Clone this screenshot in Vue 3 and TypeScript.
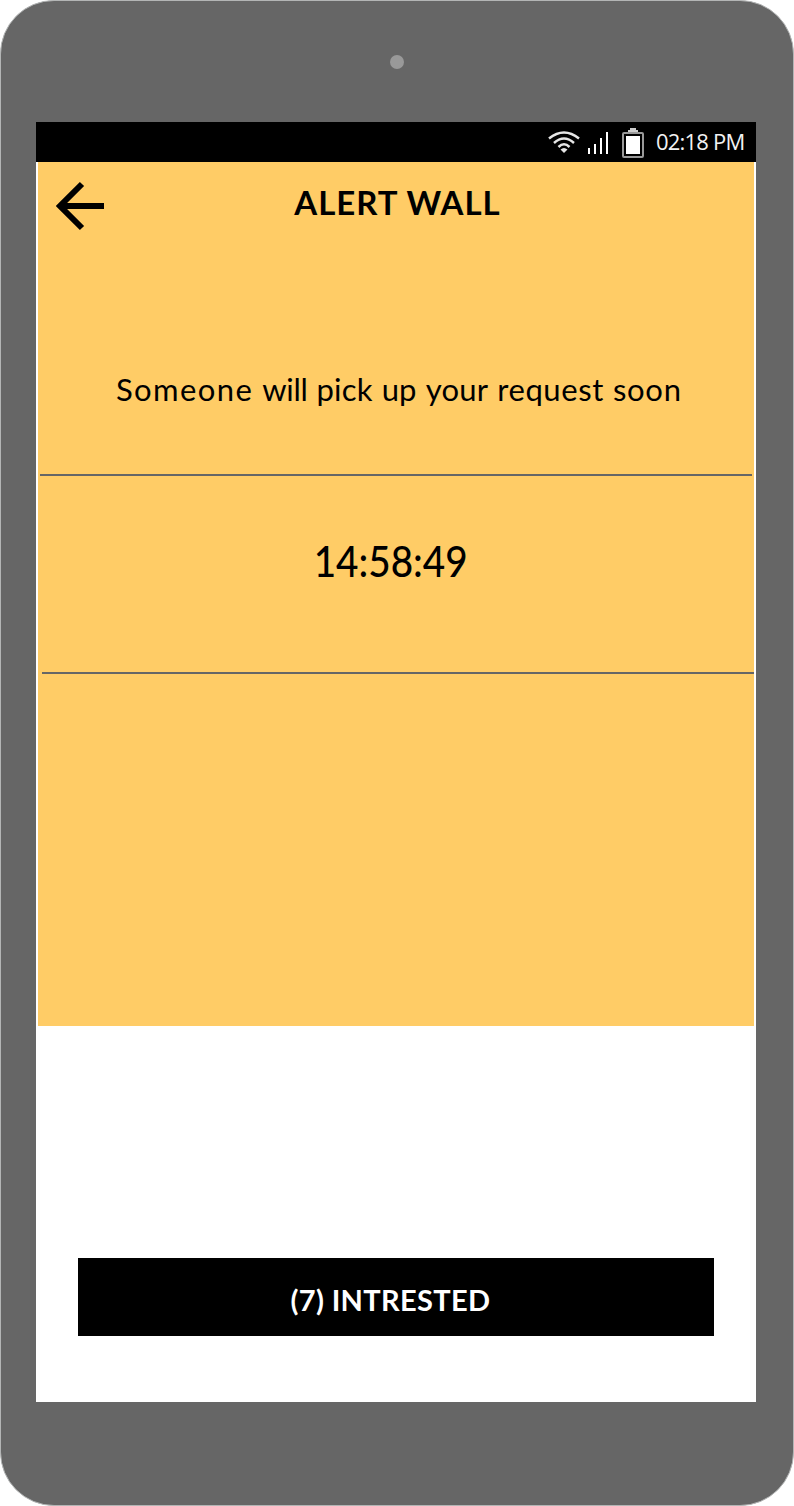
<script setup lang="ts">
const title: string = 'ALERT WALL'
const message: string[] = 'Someone will pick up your request soon'.split(' ')
const countdown: string = '14:58:49'
const interested: number = 7
const clock: string = '02:18 PM'
</script>

<template>
  <div class="device">
    <div class="bezel"><span class="camera"></span></div>
    <div class="screen">
      <div class="status">
        <svg class="wifi" width="32" height="24" viewBox="0 0 32 24" fill="none" stroke="#e6e6e6" stroke-width="2.5">
          <path d="M1 8.5Q16-3.5 31 8.5" />
          <path d="M6 13Q16 4 26 13" />
          <path d="M10.5 17Q16 11.5 21.5 17" />
          <path d="M12.5 19.5Q16 16.5 19.5 19.5L16 23Z" fill="#e6e6e6" stroke="none" />
        </svg>
        <svg class="signal" width="20" height="22" viewBox="0 0 20 22" fill="#fff">
          <path d="M0 16h2v6H0zM6 12h2v10H6zM12 6h2v16h-2zM18 0h2v22h-2z" />
        </svg>
        <svg class="battery" width="22" height="30" viewBox="0 0 22 30">
          <path d="M8 0h6v2h2v2H6V2h2z" fill="#ccc" />
          <rect x="1" y="5" width="20" height="24" rx="1" fill="none" stroke="#999" stroke-width="2" />
          <path d="M4 8h14v18H4z" fill="#fff" />
        </svg>
        <span class="clock">{{ clock }}</span>
      </div>
      <main class="panel">
        <header class="header">
          <svg class="back" width="50" height="50" viewBox="0 0 50 50" fill="none" stroke="#000" stroke-width="6">
            <path d="M48 25H5M26 3L4 25L26 47" />
          </svg>
          <h1 class="title"><span>{{ title }}</span></h1>
        </header>
        <p class="message"><span v-for="word in message" :key="word">{{ word }}</span></p>
        <div class="timer"><span>{{ countdown }}</span></div>
      </main>
      <button class="action"><span>({{ interested }}) INTRESTED</span></button>
    </div>
  </div>
</template>

<style>
body { background: #fff; }
</style>

<style scoped>
.device {
  box-sizing: border-box;
  width: 794px;
  height: 1506px;
  padding: 0 37px 0 35px;
  background: #666;
  border: 1px solid #b3b5b5;
  border-radius: 54px;
  font-family: Lato, "Open Sans", sans-serif;
  color: #000;
}
.bezel { height: 121px; display: flex; justify-content: center; box-sizing: border-box; padding-top: 53.5px; padding-left: 2px; }
.camera { width: 14px; height: 14px; border-radius: 50%; background: #999; }
.screen { height: 1280px; width: 720px; background: #fff; }
.status { height: 40px; display: flex; align-items: flex-start; background: #000; color: #f2f2f2; padding-left: 512px; box-sizing: border-box; }
.wifi { margin-top: 8px; flex: none; }
.signal { margin: 10px 0 0 8px; flex: none; }
.battery { margin: 6px 0 0 14px; flex: none; }
.clock { margin-left: 12px; font: 22px/38px "Open Sans", sans-serif; letter-spacing: -0.8px; white-space: nowrap; }
.panel { width: 716px; height: 864px; margin: 0 2px; background: #fc6; }
.header { display: flex; height: 88px; align-items: center; }
.back { margin-left: 18px; flex: none; }
.title { margin: -8px 65px 0 0; flex: 1; text-align: center; font-size: 33px; font-weight: 700; line-height: 40px; white-space: nowrap; letter-spacing: 1px; }
.message { height: 226px; margin: 0 0 0 2px; width: 712px; box-sizing: border-box; border-bottom: 2px solid #666; padding: 119px 0 0 76px; display: flex; gap: 9px; font-size: 31px; line-height: 40px; white-space: nowrap; letter-spacing: 0.2px; }
.message span:first-child { letter-spacing: 1.4px; }
.message span:nth-child(2) { letter-spacing: -0.3px; }
.message span:nth-child(6) { letter-spacing: 0.6px; }
.message span:last-child { letter-spacing: 0.7px; }
.timer { height: 198px; margin-left: 4px; width: 712px; box-sizing: border-box; border-bottom: 2px solid #666; padding: 61px 14px 0 0; text-align: center; font-size: 42px; line-height: 48px; font-weight: 500; }
.timer span { display: inline-block; transform: scaleX(0.92); }
.action { display: block; width: 636px; height: 78px; margin: 232px 0 0 42px; padding: 6px 11px 0 0; border: 0; background: #000; color: #fff; font: 700 29px/40px Lato, "Open Sans", sans-serif; letter-spacing: 0.35px; }
</style>
